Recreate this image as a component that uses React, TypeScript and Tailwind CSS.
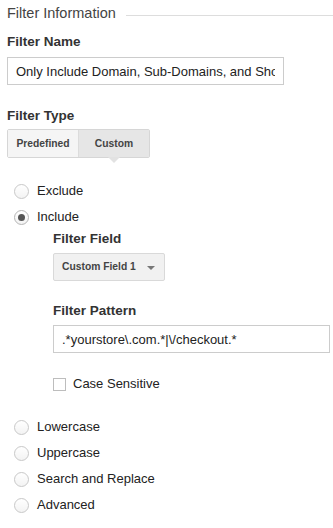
const OTHER_OPTIONS = ["Lowercase", "Uppercase", "Search and Replace", "Advanced"];

function Label({ children, className = "" }: { children: React.ReactNode; className?: string }) {
  return (
    <div className={`text-[13.5px] leading-[16px] font-bold text-[#333] whitespace-nowrap ${className}`}>
      {children}
    </div>
  );
}

function Radio({ label, checked = false }: { label: string; checked?: boolean }) {
  return (
    <div className="flex items-center h-[26px] gap-[8px] pl-[14px]">
      <span
        className={`w-[15px] h-[15px] rounded-full border bg-gradient-to-b from-white to-[#f3f3f3] flex items-center justify-center shrink-0 ${
          checked ? "border-[#b5b5b5]" : "border-[#c8c8c8]"
        }`}
      >
        {checked && <span className="w-[7px] h-[7px] rounded-full bg-[#555]" />}
      </span>
      <span className="text-[13px] text-[#222] whitespace-nowrap">{label}</span>
    </div>
  );
}

export default function App() {
  return (
    <div className="w-[333px] h-[528px] bg-white text-[#333] font-['Liberation_Sans',Arial,sans-serif] overflow-hidden">
      {/* Section heading */}
      <div className="flex items-center pt-[4px] pl-[7px]">
        <h2 className="text-[14.5px] leading-[18px] text-[#444] whitespace-nowrap">Filter Information</h2>
        <div className="flex-1 h-px bg-[#dddddd] ml-[10px] mt-[4px]" />
      </div>

      <div className="pl-[7px]">
        <Label className="mt-[12px]">Filter Name</Label>
        <input
          readOnly
          value="Only Include Domain, Sub-Domains, and Shopping Cart"
          className="mt-[7px] block w-[277px] h-[28px] border border-[#cccccc] px-[8px] text-[13px] text-[#222] outline-none bg-white"
        />

        <Label className="mt-[23px]">Filter Type</Label>
        <div className="mt-[5px] flex w-[143px] h-[29px] border border-[#d6d6d6] rounded-[2px]">
          <button className="w-[71px] h-full bg-[#f5f5f5] text-[10.3px] font-bold text-[#444] border-r border-[#dcdcdc]">
            Predefined
          </button>
          <button className="relative flex-1 h-full bg-[#e6e6e6] text-[10.3px] font-bold text-[#444]">
            Custom
            {/* active tab pointer */}
            <span className="absolute left-1/2 -translate-x-1/2 top-full w-0 h-0 border-l-[6px] border-r-[6px] border-t-[6px] border-l-transparent border-r-transparent border-t-[#e2e2e2]" />
          </button>
        </div>
      </div>

      <div className="mt-[20px]">
        <Radio label="Exclude" />
        <Radio label="Include" checked />

        {/* Include details */}
        <div className="pl-[53px]">
          <Label className="mt-[1px]">Filter Field</Label>
          <div className="mt-[6px] w-[112px] h-[28px] flex items-center justify-between px-[8px] bg-[#f1f1f1] border border-[#d9d9d9] rounded-[2px]">
            <span className="text-[10.3px] font-bold text-[#444] whitespace-nowrap">Custom Field 1</span>
            <svg width="8" height="4" viewBox="0 0 8 4" className="mr-[1px] mt-[2px]">
              <polygon points="0,0 8,0 4,4" fill="#777" />
            </svg>
          </div>

          <Label className="mt-[22px]">Filter Pattern</Label>
          <input
            readOnly
            value=".*yourstore\.com.*|\/checkout.*"
            className="mt-[6px] block w-[277px] h-[28px] border border-[#cccccc] px-[8px] text-[13px] text-[#222] outline-none bg-white"
          />

          <div className="mt-[21px] h-[20px] flex items-center gap-[7px]">
            <span className="w-[13px] h-[13px] border border-[#bdbdbd] bg-white shrink-0" />
            <span className="text-[13px] text-[#222] whitespace-nowrap">Case Sensitive</span>
          </div>
        </div>

        <div className="mt-[20px]">
          {OTHER_OPTIONS.map((o) => (
            <Radio key={o} label={o} />
          ))}
        </div>
      </div>
    </div>
  );
}
